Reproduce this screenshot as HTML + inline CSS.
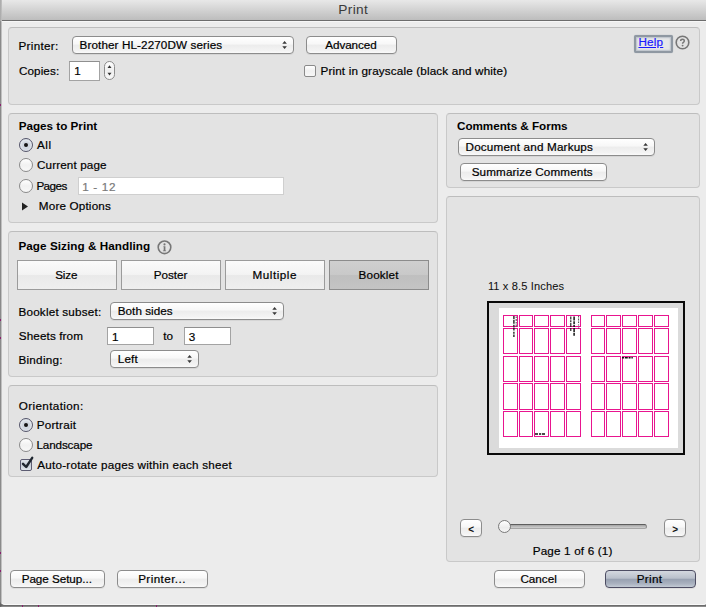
<!DOCTYPE html>
<html><head><meta charset="utf-8"><title>Print</title><style>
*{margin:0;padding:0;box-sizing:border-box}
html,body{width:706px;height:607px;overflow:hidden;background:#8a8a8a}
body{position:relative;font-family:"Liberation Sans",sans-serif}
#dlg{position:absolute;left:0;top:0;width:707px;height:605px;background:#ececec;border-bottom-left-radius:5px;border-bottom-right-radius:4px;overflow:hidden;box-shadow:inset 0 -1px 0 #f9f9f9}
#rstrip{display:none}
#lstrip{position:absolute;left:0;top:0;width:2px;height:607px;background:linear-gradient(90deg,rgba(90,90,90,0.85),rgba(120,120,120,0.15))}
#lstrip:before{content:'';position:absolute;left:0;top:0;width:2px;height:21px;background:linear-gradient(90deg,#a6a6a6,#c4c4c4)}
#bstrip{position:absolute;left:0;top:604px;width:706px;height:3px;background:linear-gradient(#7a7a7a,#686868 45%,#9a9a9a)}
#title{position:absolute;left:0;top:0;width:720px;height:21px;background:linear-gradient(#e8e8e8,#bdbdbd);border-bottom:1px solid #6c6c6c}
#title:after{content:"";position:absolute;left:0;top:21px;width:100%;height:1px;background:#f6f6f6}
.t{position:absolute;white-space:nowrap;-webkit-text-stroke:0.2px currentColor}
.b{-webkit-text-stroke:0}
.panel{position:absolute;background:#e3e3e3;border:1px solid #c9c9c9;border-top-color:#bdbdbd;border-radius:4px}
.btn{position:absolute;border:1px solid #8c8c8c;border-radius:4px;background:linear-gradient(#ffffff,#f7f7f7 45%,#ececec 50%,#f3f3f3 85%,#fafafa);box-shadow:0 1px 0 rgba(0,0,0,0.06)}
.btn.def{border-color:#4d4d63;background:linear-gradient(#d4d8df,#b9c0cb 45%,#98a1b1 52%,#aab2c0 80%,#c3cad5)}
.field{position:absolute;background:#fff;border:1px solid #a3a3a3;border-top-color:#8f8f8f}
.field.dis{border-color:#cfcfcf}
.stepper{position:absolute;border:1px solid #8c8c8c;border-radius:6px;background:linear-gradient(#fff,#efefef 50%,#f8f8f8)}
.cb{position:absolute;border:1px solid #8a8a8a;border-radius:2px;background:linear-gradient(#fff,#f0f0f0 50%,#f7f7f7)}
.cb.on{border-color:#5c5c72;background:linear-gradient(#dfe4ea,#c6ced8 50%,#dfe5eb)}
.radio{position:absolute;width:14px;height:14px;border-radius:50%;border:1px solid #8a8a8a;background:linear-gradient(#fff,#f1f1f1 50%,#f8f8f8)}
.radio.on{border-color:#55556a;background:radial-gradient(circle at 50% 55%,#d2d9e1 0,#cfd6df 40%,#e2e7ed 62%,#b9c3ce 100%)}
.dot{position:absolute;width:4.6px;height:4.6px;border-radius:50%;background:#141414}
.seg{position:absolute;border:1px solid #9b9b9b;background:linear-gradient(#fbfbfb,#f3f3f3 48%,#e9e9e9 52%,#efefef)}
.seg.sel{border-color:#8c8c8c;background:linear-gradient(#cfcfcf,#c9c9c9 48%,#bfbfbf 52%,#c4c4c4)}
.ic{position:absolute;overflow:visible}
#help{position:absolute;left:634px;top:35px;width:39px;height:18px;border:2px solid #8f98a2;border-radius:2px;background:#e6e7e8;box-shadow:inset 0 0 1.5px 1px #b9c0c8, 0 0 1px #9aa3ad}
#pvbox{position:absolute;left:487px;top:301px;width:198px;height:154px;border:2.5px solid #0a0a0a;background:#dbdbdb}
#pvpage{position:absolute;left:499px;top:308px;width:179px;height:140px;background:#fff}
.mk{position:absolute;background:#222}
.mg{position:absolute;background:#8a1e6e}
#track{position:absolute;left:500px;top:524px;width:147px;height:5px;border-radius:3px;background:linear-gradient(#a4a4a4,#d0d0d0);border:1px solid #8c8c8c;border-top-color:#5e5e5e;border-bottom-color:#a6a6a6}
#knob{position:absolute;left:498px;top:520px;width:13px;height:13px;border-radius:50%;border:1px solid #7a7a7a;background:linear-gradient(#fff,#ececec 60%,#f6f6f6)}
</style></head>
<body>
<div id="bstrip"></div>
<div id="dlg">
<div id="title"></div>
<div class="t" style="left:338.31px;top:2.03px;font-size:13.7px;line-height:16.44px;font-weight:400;color:#3a3a3a;letter-spacing:0.340px;-webkit-text-stroke:0;">Print</div>
<div class="panel" style="left:8px;top:27px;width:692px;height:78px"></div>
<div class="panel" style="left:8px;top:113px;width:430px;height:110px"></div>
<div class="panel" style="left:446px;top:113px;width:254px;height:75px"></div>
<div class="panel" style="left:8px;top:231px;width:430px;height:146px"></div>
<div class="panel" style="left:446px;top:196px;width:254px;height:366px"></div>
<div class="panel" style="left:8px;top:385px;width:430px;height:92px"></div>
<div class="t" style="left:18.44px;top:38.73px;font-size:11.7px;line-height:14.04px;font-weight:400;color:#000;letter-spacing:0.307px;">Printer:</div>
<div class="btn pop" style="left:72px;top:36px;width:222px;height:18px"></div>
<div class="t" style="left:79.58px;top:37.63px;font-size:11.7px;line-height:14.04px;font-weight:400;color:#000;letter-spacing:0.099px;">Brother HL-2270DW series</div>
<svg class="ic" style="left:280.5px;top:40px" width="8" height="10" viewBox="0 0 8 10"><path d="M3.6 0.9 L5.9 3.7 L1.3 3.7 Z M1.3 6.2 L5.9 6.2 L3.6 9.0 Z" fill="#383838"/></svg>
<div class="btn" style="left:306px;top:36px;width:91px;height:18px"></div>
<div class="t" style="left:325.22px;top:37.63px;font-size:11.7px;line-height:14.04px;font-weight:400;color:#000;letter-spacing:-0.063px;">Advanced</div>
<div class="t" style="left:18.89px;top:63.93px;font-size:11.7px;line-height:14.04px;font-weight:400;color:#000;letter-spacing:0.105px;">Copies:</div>
<div class="field" style="left:69px;top:61px;width:31px;height:20px"></div>
<div class="t" style="left:74.30px;top:63.83px;font-size:11.7px;line-height:14.04px;font-weight:400;color:#000;">1</div>
<div class="stepper" style="left:104px;top:61px;width:11px;height:19px"></div>
<svg class="ic" style="left:105px;top:63px" width="9" height="15" viewBox="0 0 9 15"><path d="M4.5 2.3 L6.5 4.9 L2.5 4.9 Z M2.5 9.8 L6.5 9.8 L4.5 12.6 Z" fill="#333"/></svg>
<div class="cb" style="left:304px;top:65px;width:12px;height:12px"></div>
<div class="t" style="left:320.44px;top:64.23px;font-size:11.7px;line-height:14.04px;font-weight:400;color:#000;letter-spacing:0.153px;">Print in grayscale (black and white)</div>
<div id="help"></div>
<div class="t" style="left:638.45px;top:35.13px;font-size:11.7px;line-height:14.04px;font-weight:400;color:#1a1aff;letter-spacing:0.199px;text-decoration:underline;">Help</div>
<svg class="ic" style="left:675px;top:35px" width="15" height="15" viewBox="0 0 15 15"><circle cx="7.5" cy="7.5" r="6.3" fill="none" stroke="#767676" stroke-width="1.6"/><path d="M5.7 6.0 Q5.7 4.3 7.5 4.3 Q9.3 4.3 9.3 5.8 Q9.3 6.8 8.4 7.3 Q7.6 7.7 7.6 8.8" fill="none" stroke="#767676" stroke-width="1.5"/><circle cx="7.6" cy="10.6" r="0.95" fill="#767676"/></svg>
<div class="t b" style="left:18.70px;top:118.83px;font-size:11.7px;line-height:14.04px;font-weight:700;color:#000;letter-spacing:-0.009px;">Pages to Print</div>
<div class="radio on" style="left:19px;top:137.8px"></div><div class="dot" style="left:23.7px;top:142.5px"></div>
<div class="t" style="left:37.05px;top:137.93px;font-size:11.7px;line-height:14.04px;font-weight:400;color:#000;letter-spacing:0.474px;">All</div>
<div class="radio" style="left:19px;top:158px"></div>
<div class="t" style="left:37.06px;top:157.73px;font-size:11.7px;line-height:14.04px;font-weight:400;color:#000;letter-spacing:0.117px;">Current page</div>
<div class="radio" style="left:19px;top:179.4px"></div>
<div class="t" style="left:36.38px;top:179.33px;font-size:11.7px;line-height:14.04px;font-weight:400;color:#000;letter-spacing:-0.558px;">Pages</div>
<div class="field dis" style="left:78px;top:177px;width:206px;height:18px"></div>
<div class="t" style="left:82.37px;top:179.63px;font-size:11.7px;line-height:14.04px;font-weight:400;color:#7a7a7a;letter-spacing:0.629px;">1 - 12</div>
<svg class="ic" style="left:21px;top:202px" width="8" height="9" viewBox="0 0 8 9"><path d="M1 0.5 L7 4.5 L1 8.5 Z" fill="#222"/></svg>
<div class="t" style="left:38.82px;top:199.03px;font-size:11.7px;line-height:14.04px;font-weight:400;color:#000;letter-spacing:0.167px;">More Options</div>
<div class="t b" style="left:457.00px;top:118.93px;font-size:11.7px;line-height:14.04px;font-weight:700;color:#000;letter-spacing:-0.034px;">Comments &amp; Forms</div>
<div class="btn pop" style="left:458px;top:138px;width:197px;height:18px"></div>
<div class="t" style="left:465.53px;top:139.63px;font-size:11.7px;line-height:14.04px;font-weight:400;color:#000;letter-spacing:0.172px;">Document and Markups</div>
<svg class="ic" style="left:641.5px;top:142px" width="8" height="10" viewBox="0 0 8 10"><path d="M3.6 0.9 L5.9 3.7 L1.3 3.7 Z M1.3 6.2 L5.9 6.2 L3.6 9.0 Z" fill="#383838"/></svg>
<div class="btn" style="left:460px;top:163px;width:147px;height:18px"></div>
<div class="t" style="left:471.68px;top:164.53px;font-size:11.7px;line-height:14.04px;font-weight:400;color:#000;letter-spacing:0.127px;">Summarize Comments</div>
<div class="t b" style="left:18.45px;top:238.73px;font-size:11.7px;line-height:14.04px;font-weight:700;color:#000;letter-spacing:0.056px;">Page Sizing &amp; Handling</div>
<svg class="ic" style="left:157px;top:240px" width="15" height="15" viewBox="0 0 15 15"><circle cx="7.5" cy="7.3" r="6.3" fill="none" stroke="#777" stroke-width="1.6"/><path d="M6.4 6.2 H8.4 V10.4 H9.1 V11.3 H5.9 V10.4 H6.7 V7.0 H6.4 Z" fill="#777"/><circle cx="7.5" cy="4.4" r="1.05" fill="#777"/></svg>
<div class="seg" style="left:17px;top:260px;width:100px;height:30px"></div>
<div class="t" style="left:55.18px;top:267.63px;font-size:11.7px;line-height:14.04px;font-weight:400;color:#000;letter-spacing:-0.149px;">Size</div>
<div class="seg" style="left:121px;top:260px;width:100px;height:30px"></div>
<div class="t" style="left:153.69px;top:267.63px;font-size:11.7px;line-height:14.04px;font-weight:400;color:#000;">Poster</div>
<div class="seg" style="left:225px;top:260px;width:100px;height:30px"></div>
<div class="t" style="left:252.54px;top:267.63px;font-size:11.7px;line-height:14.04px;font-weight:400;color:#000;letter-spacing:0.511px;">Multiple</div>
<div class="seg sel" style="left:329px;top:260px;width:100px;height:30px"></div>
<div class="t" style="left:358.62px;top:267.63px;font-size:11.7px;line-height:14.04px;font-weight:400;color:#000;letter-spacing:0.141px;">Booklet</div>
<div class="t" style="left:18.44px;top:304.83px;font-size:11.7px;line-height:14.04px;font-weight:400;color:#000;letter-spacing:0.201px;">Booklet subset:</div>
<div class="btn pop" style="left:110px;top:302px;width:174px;height:18px"></div>
<div class="t" style="left:117.76px;top:304.13px;font-size:11.7px;line-height:14.04px;font-weight:400;color:#000;letter-spacing:0.036px;">Both sides</div>
<svg class="ic" style="left:270.5px;top:306px" width="8" height="10" viewBox="0 0 8 10"><path d="M3.6 0.9 L5.9 3.7 L1.3 3.7 Z M1.3 6.2 L5.9 6.2 L3.6 9.0 Z" fill="#383838"/></svg>
<div class="t" style="left:18.75px;top:328.93px;font-size:11.7px;line-height:14.04px;font-weight:400;color:#000;letter-spacing:0.121px;">Sheets from</div>
<div class="field" style="left:107px;top:327px;width:47px;height:18px"></div>
<div class="t" style="left:112.10px;top:329.63px;font-size:11.7px;line-height:14.04px;font-weight:400;color:#000;">1</div>
<div class="t" style="left:163.20px;top:328.93px;font-size:11.7px;line-height:14.04px;font-weight:400;color:#000;">to</div>
<div class="field" style="left:184px;top:327px;width:47px;height:18px"></div>
<div class="t" style="left:188.80px;top:329.63px;font-size:11.7px;line-height:14.04px;font-weight:400;color:#000;">3</div>
<div class="t" style="left:18.44px;top:352.73px;font-size:11.7px;line-height:14.04px;font-weight:400;color:#000;letter-spacing:0.263px;">Binding:</div>
<div class="btn pop" style="left:110px;top:350px;width:89px;height:18px"></div>
<div class="t" style="left:117.86px;top:351.73px;font-size:11.7px;line-height:14.04px;font-weight:400;color:#000;letter-spacing:0.119px;">Left</div>
<svg class="ic" style="left:185.5px;top:354px" width="8" height="10" viewBox="0 0 8 10"><path d="M3.6 0.9 L5.9 3.7 L1.3 3.7 Z M1.3 6.2 L5.9 6.2 L3.6 9.0 Z" fill="#383838"/></svg>
<div class="t" style="left:18.80px;top:398.83px;font-size:11.7px;line-height:14.04px;font-weight:400;color:#000;letter-spacing:0.360px;">Orientation:</div>
<div class="radio on" style="left:19px;top:418px"></div><div class="dot" style="left:23.7px;top:422.7px"></div>
<div class="t" style="left:36.63px;top:417.73px;font-size:11.7px;line-height:14.04px;font-weight:400;color:#000;letter-spacing:0.253px;">Portrait</div>
<div class="radio" style="left:19px;top:438px"></div>
<div class="t" style="left:36.45px;top:437.53px;font-size:11.7px;line-height:14.04px;font-weight:400;color:#000;letter-spacing:-0.138px;">Landscape</div>
<div class="cb on" style="left:20px;top:459px;width:12px;height:12px"></div>
<svg class="ic" style="left:18px;top:455px" width="18" height="16" viewBox="0 0 18 16"><path d="M5 8.8 L8.2 12 L14.2 2.8" fill="none" stroke="#1f2630" stroke-width="2.4" stroke-linecap="round" stroke-linejoin="round"/></svg>
<div class="t" style="left:37.13px;top:457.93px;font-size:11.7px;line-height:14.04px;font-weight:400;color:#000;letter-spacing:0.240px;">Auto-rotate pages within each sheet</div>
<div class="t" style="left:487.90px;top:280.09px;font-size:11.1px;line-height:13.32px;font-weight:400;color:#111;letter-spacing:0.126px;-webkit-text-stroke:0.05px #111;">11 x 8.5 Inches</div>
<div id="pvbox"></div>
<div id="pvpage"></div>
<svg class="ic" style="left:0;top:0" width="706" height="607" shape-rendering="crispEdges"><rect x="503.5" y="315.5" width="14" height="11" fill="none" stroke="#e8158f" stroke-width="1"/><rect x="503.5" y="328.5" width="14" height="25" fill="none" stroke="#e8158f" stroke-width="1"/><rect x="503.5" y="356.5" width="14" height="25" fill="none" stroke="#e8158f" stroke-width="1"/><rect x="503.5" y="383.5" width="14" height="26" fill="none" stroke="#e8158f" stroke-width="1"/><rect x="503.5" y="411.5" width="14" height="25" fill="none" stroke="#e8158f" stroke-width="1"/><rect x="519.5" y="315.5" width="13" height="11" fill="none" stroke="#e8158f" stroke-width="1"/><rect x="519.5" y="328.5" width="13" height="25" fill="none" stroke="#e8158f" stroke-width="1"/><rect x="519.5" y="356.5" width="13" height="25" fill="none" stroke="#e8158f" stroke-width="1"/><rect x="519.5" y="383.5" width="13" height="26" fill="none" stroke="#e8158f" stroke-width="1"/><rect x="519.5" y="411.5" width="13" height="25" fill="none" stroke="#e8158f" stroke-width="1"/><rect x="534.5" y="315.5" width="14" height="11" fill="none" stroke="#e8158f" stroke-width="1"/><rect x="534.5" y="328.5" width="14" height="25" fill="none" stroke="#e8158f" stroke-width="1"/><rect x="534.5" y="356.5" width="14" height="25" fill="none" stroke="#e8158f" stroke-width="1"/><rect x="534.5" y="383.5" width="14" height="26" fill="none" stroke="#e8158f" stroke-width="1"/><rect x="534.5" y="411.5" width="14" height="25" fill="none" stroke="#e8158f" stroke-width="1"/><rect x="550.5" y="315.5" width="14" height="11" fill="none" stroke="#e8158f" stroke-width="1"/><rect x="550.5" y="328.5" width="14" height="25" fill="none" stroke="#e8158f" stroke-width="1"/><rect x="550.5" y="356.5" width="14" height="25" fill="none" stroke="#e8158f" stroke-width="1"/><rect x="550.5" y="383.5" width="14" height="26" fill="none" stroke="#e8158f" stroke-width="1"/><rect x="550.5" y="411.5" width="14" height="25" fill="none" stroke="#e8158f" stroke-width="1"/><rect x="566.5" y="315.5" width="14" height="11" fill="none" stroke="#e8158f" stroke-width="1"/><rect x="566.5" y="328.5" width="14" height="25" fill="none" stroke="#e8158f" stroke-width="1"/><rect x="566.5" y="356.5" width="14" height="25" fill="none" stroke="#e8158f" stroke-width="1"/><rect x="566.5" y="383.5" width="14" height="26" fill="none" stroke="#e8158f" stroke-width="1"/><rect x="566.5" y="411.5" width="14" height="25" fill="none" stroke="#e8158f" stroke-width="1"/><rect x="591.5" y="315.5" width="13" height="11" fill="none" stroke="#e8158f" stroke-width="1"/><rect x="591.5" y="328.5" width="13" height="25" fill="none" stroke="#e8158f" stroke-width="1"/><rect x="591.5" y="356.5" width="13" height="25" fill="none" stroke="#e8158f" stroke-width="1"/><rect x="591.5" y="383.5" width="13" height="26" fill="none" stroke="#e8158f" stroke-width="1"/><rect x="591.5" y="411.5" width="13" height="25" fill="none" stroke="#e8158f" stroke-width="1"/><rect x="606.5" y="315.5" width="14" height="11" fill="none" stroke="#e8158f" stroke-width="1"/><rect x="606.5" y="328.5" width="14" height="25" fill="none" stroke="#e8158f" stroke-width="1"/><rect x="606.5" y="356.5" width="14" height="25" fill="none" stroke="#e8158f" stroke-width="1"/><rect x="606.5" y="383.5" width="14" height="26" fill="none" stroke="#e8158f" stroke-width="1"/><rect x="606.5" y="411.5" width="14" height="25" fill="none" stroke="#e8158f" stroke-width="1"/><rect x="622.5" y="315.5" width="14" height="11" fill="none" stroke="#e8158f" stroke-width="1"/><rect x="622.5" y="328.5" width="14" height="25" fill="none" stroke="#e8158f" stroke-width="1"/><rect x="622.5" y="356.5" width="14" height="25" fill="none" stroke="#e8158f" stroke-width="1"/><rect x="622.5" y="383.5" width="14" height="26" fill="none" stroke="#e8158f" stroke-width="1"/><rect x="622.5" y="411.5" width="14" height="25" fill="none" stroke="#e8158f" stroke-width="1"/><rect x="638.5" y="315.5" width="14" height="11" fill="none" stroke="#e8158f" stroke-width="1"/><rect x="638.5" y="328.5" width="14" height="25" fill="none" stroke="#e8158f" stroke-width="1"/><rect x="638.5" y="356.5" width="14" height="25" fill="none" stroke="#e8158f" stroke-width="1"/><rect x="638.5" y="383.5" width="14" height="26" fill="none" stroke="#e8158f" stroke-width="1"/><rect x="638.5" y="411.5" width="14" height="25" fill="none" stroke="#e8158f" stroke-width="1"/><rect x="654.5" y="315.5" width="14" height="11" fill="none" stroke="#e8158f" stroke-width="1"/><rect x="654.5" y="328.5" width="14" height="25" fill="none" stroke="#e8158f" stroke-width="1"/><rect x="654.5" y="356.5" width="14" height="25" fill="none" stroke="#e8158f" stroke-width="1"/><rect x="654.5" y="383.5" width="14" height="26" fill="none" stroke="#e8158f" stroke-width="1"/><rect x="654.5" y="411.5" width="14" height="25" fill="none" stroke="#e8158f" stroke-width="1"/></svg>
<svg class="ic" style="left:0;top:0" width="706" height="607"><path d="M513.9 316 V337" stroke="#111" stroke-width="1.3" stroke-dasharray="3 0.8 4 1 2 0.8 3 1.2 2 0.8 4"/><path d="M516.2 316.5 V327" stroke="#333" stroke-width="0.9" stroke-dasharray="1.5 1 2 1 1.5 1 2"/><path d="M570.8 316.5 V332" stroke="#111" stroke-width="1.1" stroke-dasharray="3 0.8 2 0.8 4 0.8 3"/><path d="M574.1 316.5 V337" stroke="#111" stroke-width="1.5" stroke-dasharray="4 0.8 3 0.8 2 0.8 4 0.8 3"/><path d="M578.6 316 V330" stroke="#333" stroke-width="0.9" stroke-dasharray="1.5 1 2 1 1.5"/><path d="M622 357.8 H632.8" stroke="#111" stroke-width="1.6" stroke-dasharray="2 0.8 3 0.8 2 0.8 3"/><path d="M535 434 H545" stroke="#111" stroke-width="1.6" stroke-dasharray="3 1 2 0.8 4"/></svg>
<div class="btn sm" style="left:460px;top:519px;width:22px;height:18px"></div>
<div class="t b" style="left:468.30px;top:523.53px;font-size:10px;line-height:12.0px;font-weight:700;color:#111;">&lt;</div>
<div id="track"></div>
<div id="knob"></div>
<div class="btn sm" style="left:664px;top:519px;width:22px;height:18px"></div>
<div class="t b" style="left:672.30px;top:523.53px;font-size:10px;line-height:12.0px;font-weight:700;color:#111;">&gt;</div>
<div class="t" style="left:532.76px;top:544.13px;font-size:11.7px;line-height:14.04px;font-weight:400;color:#000;letter-spacing:0.162px;">Page 1 of 6 (1)</div>
<div class="btn" style="left:10px;top:570px;width:95px;height:18px"></div>
<div class="t" style="left:21.65px;top:572.33px;font-size:11.7px;line-height:14.04px;font-weight:400;color:#000;letter-spacing:-0.044px;">Page Setup...</div>
<div class="btn" style="left:117px;top:570px;width:91px;height:18px"></div>
<div class="t" style="left:138.15px;top:572.33px;font-size:11.7px;line-height:14.04px;font-weight:400;color:#000;letter-spacing:0.420px;">Printer...</div>
<div class="btn" style="left:494px;top:570px;width:91px;height:18px"></div>
<div class="t" style="left:520.39px;top:572.33px;font-size:11.7px;line-height:14.04px;font-weight:400;color:#000;letter-spacing:0.007px;">Cancel</div>
<div class="btn def" style="left:605px;top:570px;width:91px;height:18px"></div>
<div class="t" style="left:636.71px;top:572.33px;font-size:11.7px;line-height:14.04px;font-weight:400;color:#000;letter-spacing:0.340px;">Print</div>
</div>
<div id="lstrip"></div><div id="rstrip"></div><div class="mg" style="left:0;top:104px;width:1px;height:2px"></div><div class="mg" style="left:0;top:319px;width:1px;height:2px"></div><div class="mg" style="left:0;top:337px;width:1px;height:2px"></div><div class="mg" style="left:0;top:552px;width:1px;height:2px"></div><div class="mg" style="left:0;top:570px;width:1px;height:2px"></div><div class="mg" style="left:22px;top:605px;width:1px;height:2px"></div><div class="mg" style="left:38px;top:605px;width:1px;height:2px"></div><div class="mg" style="left:156px;top:605px;width:1px;height:2px"></div>
</body></html>
